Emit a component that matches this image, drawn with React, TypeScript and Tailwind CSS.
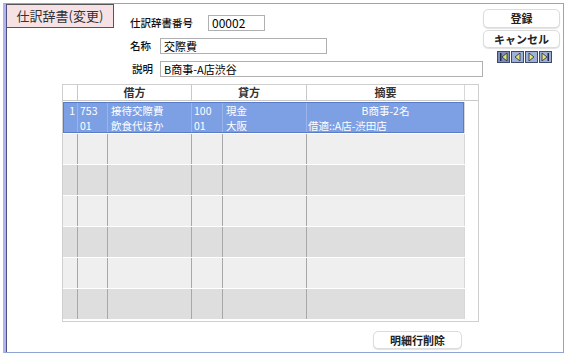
import React from "react";

const font = { fontFamily: '"Noto Sans CJK JP", "Noto Sans", sans-serif' };

function NavIcon({ kind, active }: { kind: "first" | "prev" | "next" | "last"; active?: boolean }) {
  return (
    <div
      className={`w-[13px] h-[12px] border border-[#3d4a6b] flex items-center justify-center ${
        active ? "bg-[#7d8fb8]" : "bg-[#9fb0d6]"
      }`}
    >
      <svg width="11" height="10" viewBox="0 0 11 10">
        {kind === "first" && (
          <>
            <rect x="2" y="1" width="1.5" height="8" fill="#1e2a48" />
            <polygon points="9,1 4,5 9,9" fill="#e8e070" stroke="#1e2a48" strokeWidth="0.8" />
          </>
        )}
        {kind === "prev" && <polygon points="8,1 3,5 8,9" fill="#e8e070" stroke="#1e2a48" strokeWidth="0.8" />}
        {kind === "next" && <polygon points="3,1 8,5 3,9" fill="#e8e070" stroke="#1e2a48" strokeWidth="0.8" />}
        {kind === "last" && (
          <>
            <polygon points="2,1 7,5 2,9" fill="#e8e070" stroke="#1e2a48" strokeWidth="0.8" />
            <rect x="7.5" y="1" width="1.5" height="8" fill="#1e2a48" />
          </>
        )}
      </svg>
    </div>
  );
}

const cols = ["w-[14px]", "w-[30px]", "w-[84px]", "w-[31px]", "w-[84px]", "w-[158px]"];

function EmptyRow({ dark }: { dark: boolean }) {
  return (
    <div className={`flex h-[31px] border-t border-white ${dark ? "bg-[#dedede]" : "bg-[#efefef]"}`}>
      {cols.map((w, i) => (
        <div key={i} className={`${w} h-full ${i > 0 ? "border-l border-[#a8a8a8]" : ""}`} />
      ))}
      <div className="w-[14px] h-full bg-white border-l border-[#d8d8d8]" />
    </div>
  );
}

export default function App() {
  return (
    <div className="w-[572px] h-[359px] bg-white pt-[3px] pl-[3px]" style={font}>
      <div className="w-[561px] h-[350px] border-t border-r border-b border-[#8ea4d4] border-l-[3px] border-l-[#b4b2ec]">
        <div className="h-full border-l border-[#4c5183] flex flex-col">
          {/* top area */}
          <div className="flex h-[80px]">
            <div className="w-[113px] h-[24px] bg-[#f6e2e5] border border-l-0 border-[#555] flex items-center justify-center text-[13px] text-[#333]">
              仕訳辞書(変更)
            </div>

            <div className="ml-[16px] flex flex-col text-[10.5px] font-medium text-[#111]">
              <div className="flex items-center mt-[11px] h-[16px]">
                <span className="w-[78px]">仕訳辞書番号</span>
                <div className="w-[57px] h-[16px] border border-[#b0b0b0] bg-white px-[3px] flex items-center text-[12px] font-normal text-black">
                  00002
                </div>
              </div>
              <div className="flex items-center mt-[7px] h-[16px]">
                <span className="w-[30px]">名称</span>
                <div className="w-[167px] h-[16px] border border-[#b0b0b0] bg-white px-[3px] flex items-center text-[11px] font-normal text-black">
                  交際費
                </div>
              </div>
              <div className="flex items-center mt-[7px] h-[16px]">
                <span className="w-[30px] pl-[2px]">説明</span>
                <div className="w-[323px] h-[16px] border border-[#b0b0b0] bg-white px-[3px] flex items-center text-[11px] font-normal text-black">
                  B商事-A店渋谷
                </div>
              </div>
            </div>

            <div className="ml-auto mr-[3px] flex flex-col items-end">
              <button className="mt-[5px] w-[77px] h-[19px] rounded-[5px] bg-white border border-[#dcdcdc] shadow-[0_1px_1px_rgba(0,0,0,0.12)] text-[11px] font-bold text-[#222]">
                登録
              </button>
              <button className="mt-[2px] w-[77px] h-[18px] rounded-[5px] bg-white border border-[#dcdcdc] shadow-[0_1px_1px_rgba(0,0,0,0.12)] text-[11px] font-bold text-[#222]">
                キャンセル
              </button>
              <div className="mt-[3px] mr-[8px] flex gap-[1px]">
                <NavIcon kind="first" active />
                <NavIcon kind="prev" />
                <NavIcon kind="next" />
                <NavIcon kind="last" />
              </div>
            </div>
          </div>

          {/* table */}
          <div className="ml-[55px] w-[417px] h-[238px] border border-[#cfcfcf] bg-white flex flex-col">
            <div className="flex h-[16px] text-[11px] font-bold text-[#333] border-b border-[#c8c8c8]">
              <div className="w-[14px]" />
              <div className="w-[114px] border-l border-[#c8c8c8] flex items-center justify-center">借方</div>
              <div className="w-[115px] border-l border-[#c8c8c8] flex items-center justify-center">貸方</div>
              <div className="w-[158px] border-l border-[#c8c8c8] flex items-center justify-center">摘要</div>
              <div className="w-[14px] border-l border-[#d8d8d8]" />
            </div>

            {/* selected row */}
            <div className="flex h-[31px] mt-[1px] text-[10.5px] text-white leading-[15px]">
              <div className="flex w-[401px] bg-[#7d9fe4] border border-[#5a7cc6] overflow-hidden">
                <div className="w-[13px] text-right pr-[2px]">
                  <div>1</div>
                </div>
                <div className="w-[30px] pl-[2px] border-l border-[#9ab3ea]">
                  <div>753</div>
                  <div>01</div>
                </div>
                <div className="w-[84px] pl-[3px] border-l border-[#9ab3ea]">
                  <div>接待交際費</div>
                  <div>飲食代ほか</div>
                </div>
                <div className="w-[31px] pl-[2px] border-l border-[#9ab3ea]">
                  <div>100</div>
                  <div>01</div>
                </div>
                <div className="w-[84px] pl-[3px] border-l border-[#9ab3ea]">
                  <div>現金</div>
                  <div>大阪</div>
                </div>
                <div className="flex-1 pl-[1px] border-l border-[#9ab3ea]">
                  <div className="text-center">B商事-2名</div>
                  <div>借適::A店-渋田店</div>
                </div>
              </div>
              <div className="w-[14px] bg-white border-l border-[#d8d8d8]" />
            </div>

            <EmptyRow dark={false} />
            <EmptyRow dark />
            <EmptyRow dark={false} />
            <EmptyRow dark />
            <EmptyRow dark={false} />
            <EmptyRow dark />
          </div>

          <div className="flex mt-[9px] ml-[366px]">
            <button className="w-[89px] h-[18px] rounded-[5px] bg-white border border-[#dcdcdc] shadow-[0_1px_1px_rgba(0,0,0,0.12)] text-[11px] font-bold text-[#222]">
              明細行削除
            </button>
          </div>
        </div>
      </div>
    </div>
  );
}
